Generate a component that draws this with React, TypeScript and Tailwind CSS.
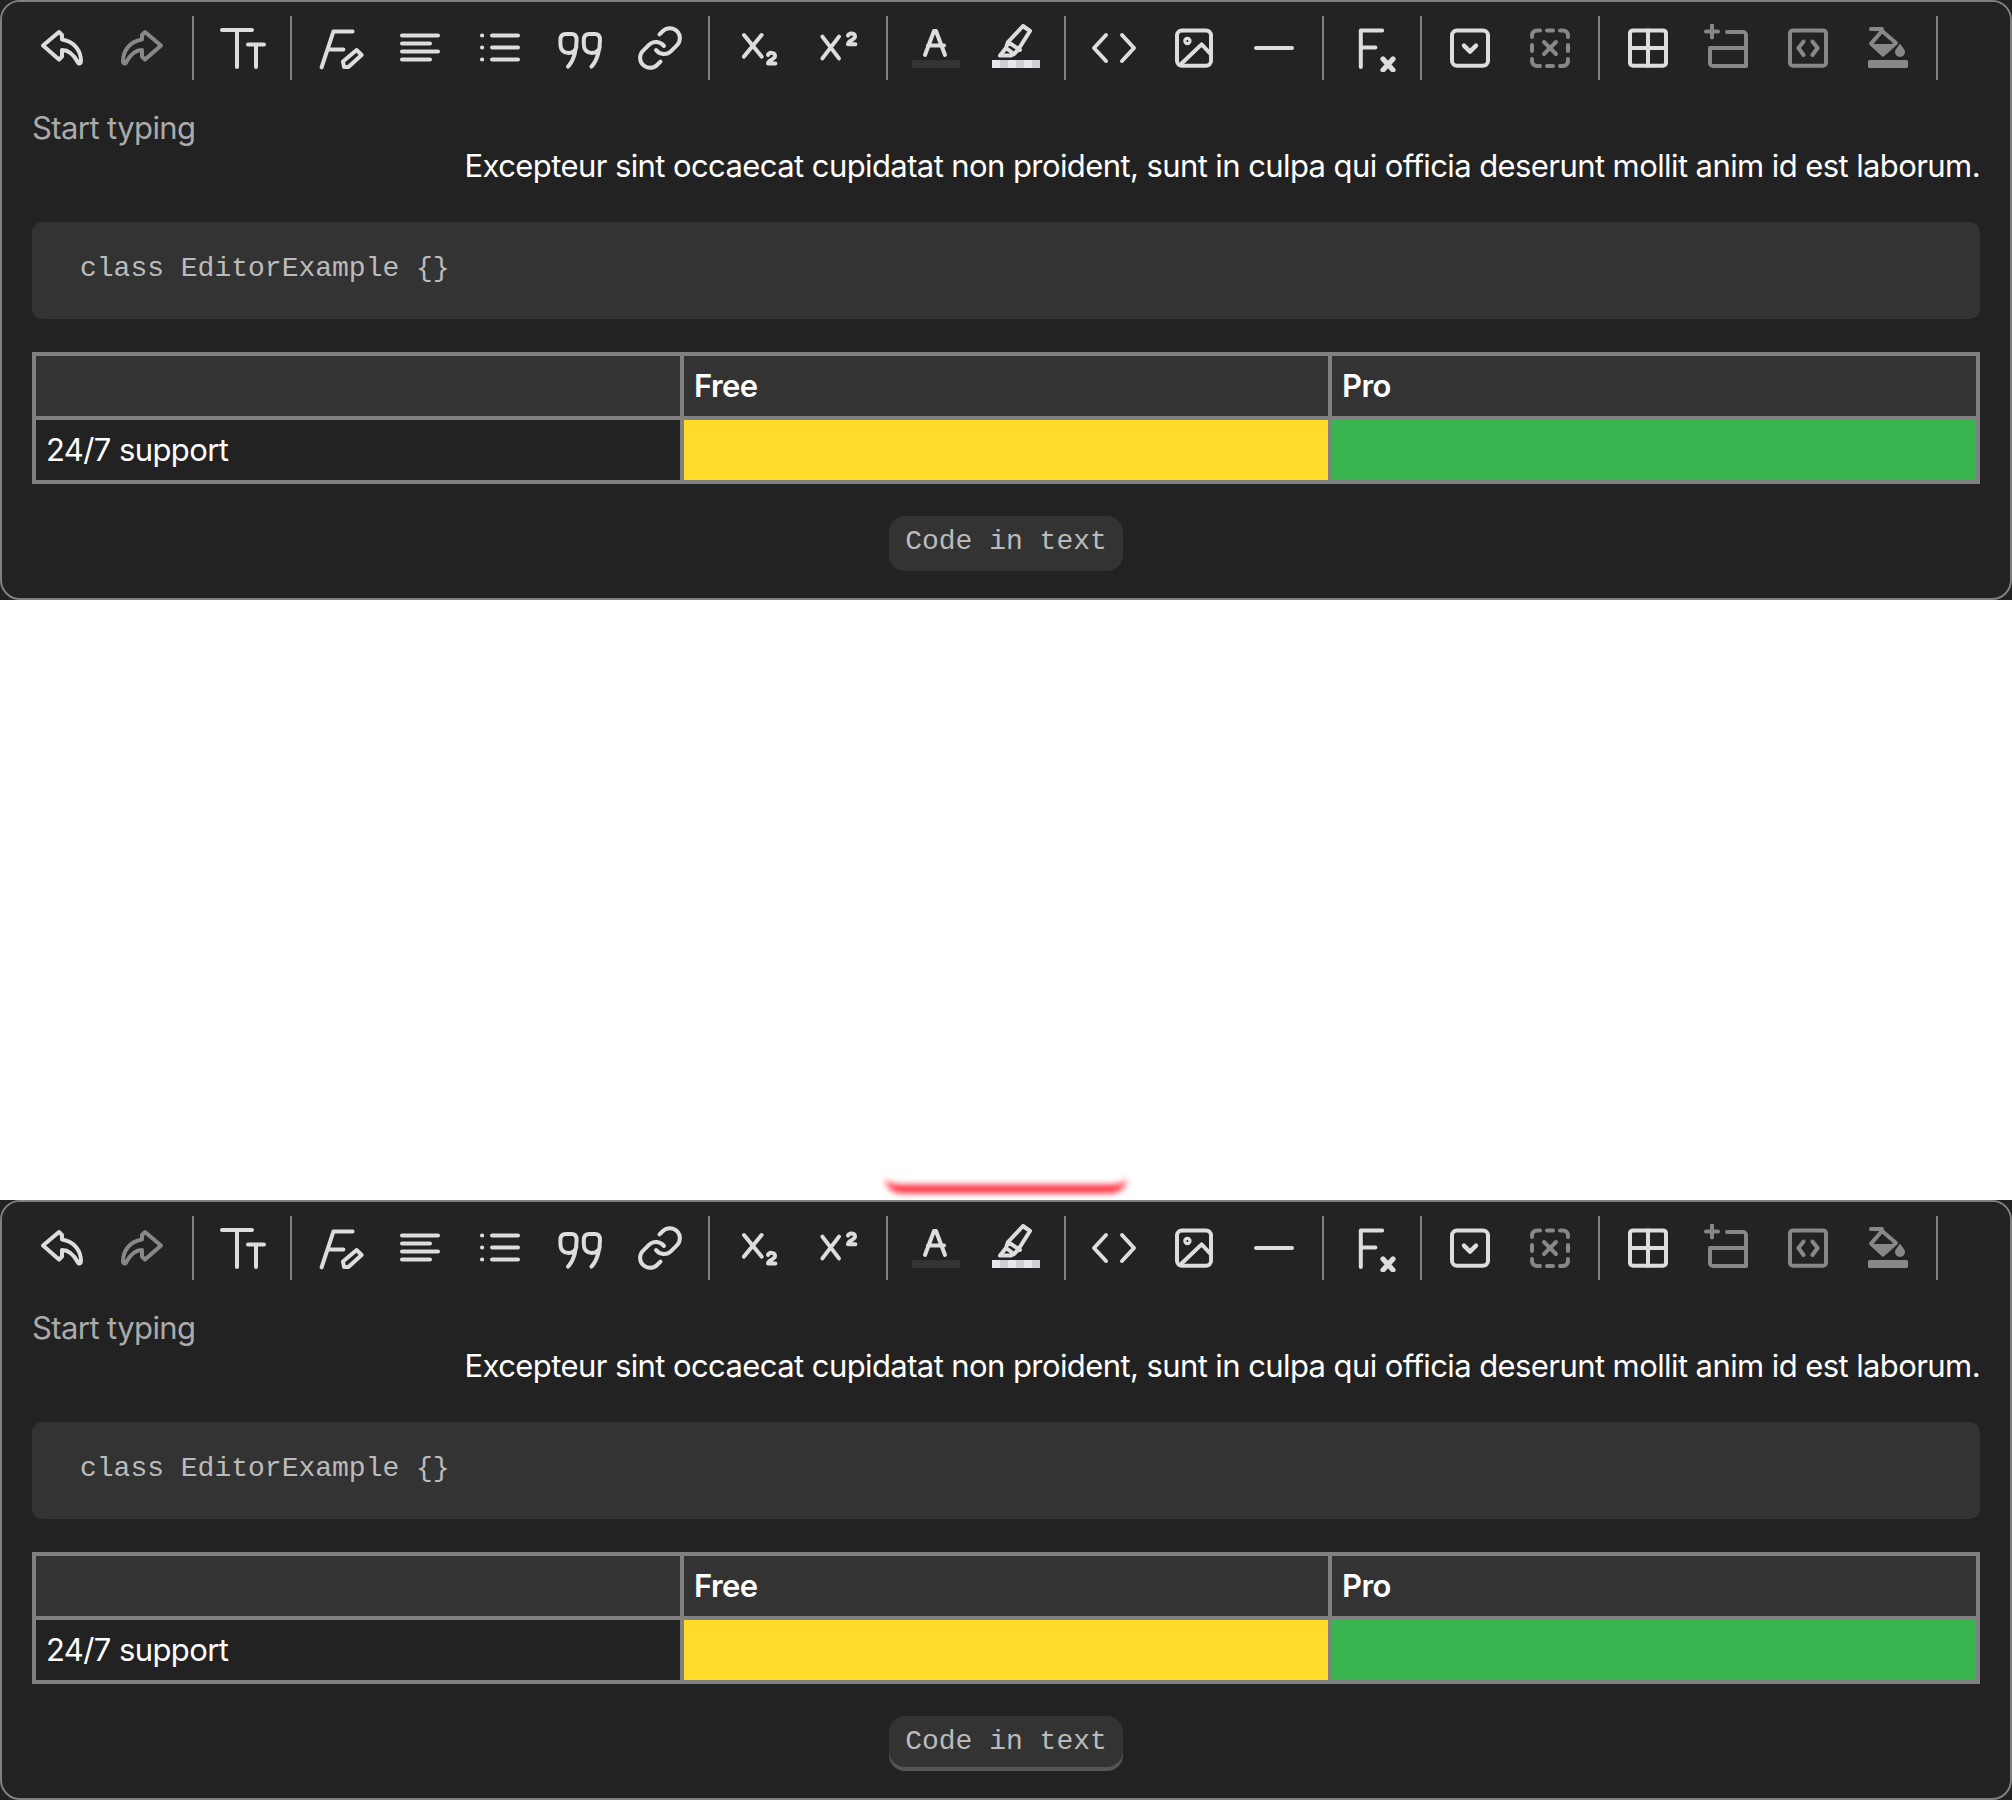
const icon = "w-12 h-12 fill-none stroke-current stroke-2 [stroke-linecap:round] [stroke-linejoin:round]";

const Undo = () => (
  <svg viewBox="0 0 24 24" className={icon}>
    <path d="M9.5 4 1.500 10.800l8 7 1.500-1.500V13c3.500 0 6 2.500 8 6.300.5.800 1.500.5 1.500-.5 0-5-3-10-9.500-11V5.500z" />
  </svg>
);

const Redo = () => (
  <svg viewBox="0 0 24 24" className={icon}>
    <path d="M12.500 4l8 6.800-8 7-1.500-1.500V13c-3.500 0-6 2.500-8 6.300-.5.800-1.500.5-1.500-.5 0-5 3-10 9.500-11V5.500z" />
  </svg>
);

const TextSize = () => (
  <svg viewBox="0 0 24 24" className={icon}>
    <path d="M2 3h15M9.500 3v18.500M15 10.200h8M19 10.200v11.300" />
  </svg>
);

const FontEdit = () => (
  <svg viewBox="0 0 24 24" className={icon}>
    <path d="M2.800 21.700 8.700 3.800h9.600M5.700 12.700h8" />
    <path d="M14 21.500l-.5-2.700 6.800-5.800 2.500 2.500-6.600 6z" />
  </svg>
);

const Align = () => (
  <svg viewBox="0 0 24 24" className={icon}>
    <path d="M3 5.800h18M3 9.800h14M3 13.800h18M3 17.800h14" />
  </svg>
);

const List = () => (
  <svg viewBox="0 0 24 24" className={icon}>
    <path d="M8 5.800h13M8 11.800h13M8 17.800h13M3 5.800h.1M3 11.800h.1M3 17.800h.1" />
  </svg>
);

const Quote = () => (
  <svg viewBox="0 0 24 24" className={icon}>
    <path d="M10.300 8c0 5-1.500 10.500-4.300 13.300M10.300 8c0-2-1-3-2.500-3H5C3 5 2.200 6 2.200 8v2c0 3 1.800 4.500 4 4.500 2 0 3.500-1 4-3" />
    <path d="M22 8c0 5-1.500 10.500-4.300 13.300M22 8c0-2-1-3-2.500-3h-2.800c-2 0-2.800 1-2.800 3v2c0 3 1.800 4.500 4 4.500 2 0 3.500-1 4-3" />
  </svg>
);

const LinkIcon = () => (
  <svg viewBox="0 0 24 24" className={icon}>
    <path d="M10 13a5 5 0 0 0 7.540.54l3-3a5 5 0 0 0-7.070-7.070l-1.720 1.710" />
    <path d="M14 11a5 5 0 0 0-7.540-.54l-3 3a5 5 0 0 0 7.070 7.070l1.710-1.710" />
  </svg>
);

const Sub = () => (
  <svg viewBox="0 0 24 24" className={icon}>
    <path d="m5 5.500 8.800 10.800M13.800 5.500 5 16.300" />
    <path d="M17 15.500c.5-1.500 3.500-1.500 3.500.5 0 1.700-3.500 2-3.500 3.800h3.700" />
  </svg>
);

const Sup = () => (
  <svg viewBox="0 0 24 24" className={icon}>
    <path d="m4.200 6.300 8.300 10.900M12.500 6.300l-8.300 10.900" />
    <path d="M17 5.800c.5-1.500 3.500-1.500 3.500.5 0 1.700-3.500 2-3.500 3.800h3.700" />
  </svg>
);

const TextColor = () => (
  <svg viewBox="0 0 24 24" className={icon}>
    <path d="M6.500 15.500 11 3.500h1l4.500 12M8 10.800h8" />
    <rect x="0" y="18" width="24" height="4" className="fill-[#333] stroke-0" />
  </svg>
);

const Marker = () => (
  <svg viewBox="0 0 24 24" className={icon}>
    <path d="M15.500 1 19 3.500l-6 9.500-2 2-4-3 1-3zM8 9l6 4M7 12l-3 3.800h5.500L11 15" />
    {[0, 8, 16].map((x) => (
      <rect key={x} x={x} y="18" width="4" height="4" className="fill-[#e5e7eb] stroke-0" />
    ))}
    {[4, 12, 20].map((x) => (
      <rect key={x} x={x} y="18" width="4" height="4" className="fill-[#ccd0d6] stroke-0" />
    ))}
  </svg>
);

const CodeIcon = () => (
  <svg viewBox="0 0 24 24" className={icon}>
    <path d="M8 5.500 2 12l6 6.500M16 5.500l6 6.500-6 6.500" />
  </svg>
);

const Picture = () => (
  <svg viewBox="0 0 24 24" className={icon}>
    <rect x="3.500" y="3.200" width="17" height="17.700" rx="2.500" />
    <circle cx="8.700" cy="8.500" r="1.300" className="stroke-[1.600]" />
    <path d="M5 20.500 15.800 10.200l4.700 5" />
  </svg>
);

const Rule = () => (
  <svg viewBox="0 0 24 24" className={icon}>
    <path d="M3 12h18" />
  </svg>
);

const Formula = () => (
  <svg viewBox="0 0 24 24" className={icon}>
    <path d="M6.400 21.500V3.200h10.700M6.400 11.800h7.300" />
    <path d="m17.500 17.500 5 5.500M22.500 17.500l-5 5.500" className="stroke-[2.600]" />
  </svg>
);

const Callout = () => (
  <svg viewBox="0 0 24 24" className={icon}>
    <rect x="3" y="3.200" width="18" height="17.700" rx="2.500" />
    <path d="m9 10.800 3 3 3-3" className="stroke-[2.200]" />
  </svg>
);

const DashedX = () => (
  <svg viewBox="0 0 24 24" className={icon}>
    <path d="M3 6.500V5.700a2.500 2.500 0 0 1 2.500-2.500H7M10.500 3.200h3M17 3.200h1.500A2.500 2.500 0 0 1 21 5.700v.8M21 10.500v3M21 17.500v1a2.500 2.500 0 0 1-2.500 2.500H17M13.500 21h-3M7 21H5.500A2.500 2.500 0 0 1 3 18.500v-1M3 13.500v-3" />
    <path d="m9 9 6 6M15 9l-6 6" />
  </svg>
);

const TableIcon = () => (
  <svg viewBox="0 0 24 24" className={icon}>
    <rect x="3" y="3.200" width="18" height="17.700" rx="1.500" />
    <path d="M12 3.200v17.700M3 12h18" />
  </svg>
);

const AddRow = () => (
  <svg viewBox="0 0 24 24" className={icon}>
    <path d="M11.500 4H19.500A1.500 1.500 0 0 1 21 5.500v15.500H4.500A1.500 1.500 0 0 1 3 19.500v-7.500h18M1 3.700h6M4 .7v6" />
  </svg>
);

const CodeFrame = () => (
  <svg viewBox="0 0 24 24" className={icon}>
    <rect x="3" y="3.200" width="18" height="17.700" rx="1.500" />
    <path d="M9.800 8.800 7.200 12l2.600 3.500M14.200 8.800l2.600 3.200-2.600 3.500" />
  </svg>
);

const Fill = () => (
  <svg viewBox="0 0 24 24" className={icon}>
    <path d="M3.500 2.500H9M9 3.500 3.500 9.800l6 5.500 6.500-5.800z" />
    <path d="M4.500 10.500H15L9.500 15z" className="fill-current stroke-1" />
    <path d="M18 9.800c1 1.800 2.500 2.900 2.500 4.200a2.500 2.500 0 0 1-5 0c0-1.300 1.500-2.400 2.500-4.200z" className="fill-current stroke-0" />
    <rect x="2" y="18" width="20" height="4" rx=".8" className="fill-current stroke-0" />
  </svg>
);

const groups = [
  [{ I: Undo }, { I: Redo, off: true }],
  [{ I: TextSize }],
  [{ I: FontEdit }, { I: Align }, { I: List }, { I: Quote }, { I: LinkIcon }],
  [{ I: Sub }, { I: Sup }],
  [{ I: TextColor }, { I: Marker }],
  [{ I: CodeIcon }, { I: Picture }, { I: Rule }],
  [{ I: Formula }],
  [{ I: Callout }, { I: DashedX, off: true }],
  [{ I: TableIcon }, { I: AddRow, off: true }, { I: CodeFrame, off: true }, { I: Fill, off: true }],
];

function Toolbar() {
  return (
    <div className="flex h-[94px] items-start rounded-t-[18px] bg-[#232323] px-[22px] pt-[14px]">
      {groups.map((group, i) => (
        <div key={i} className="flex items-center">
          {group.map(({ I, off }: any, j) => (
            <div key={j} className={`flex h-16 w-20 items-center justify-center ${off ? "text-[#888]" : "text-[#ddd]"}`}>
              <I />
            </div>
          ))}
          <div className="mx-2 h-16 w-[2px] bg-[#808080]" />
        </div>
      ))}
    </div>
  );
}

function Editor({ pillShadow }: { pillShadow?: boolean }) {
  return (
    <div className="h-[600px] bg-[#222]">
      <div className="h-full rounded-[20px] border-2 border-[#808080] font-['Inter',sans-serif] text-[31px] tracking-[-0.019em] text-white">
        <Toolbar />
        <div className="px-[30px]">
          <p className="h-[44px] pt-[14px] leading-[36px] text-[#aaa]">Start typing</p>
          <p className="mt-[4px] text-right leading-[44px]">
            Excepteur sint occaecat cupidatat non proident, sunt in culpa qui officia deserunt mollit anim id est laborum.
          </p>
          <pre className="mt-[34px] h-[97px] rounded-[10px] bg-[#333] px-12 pt-[29px] font-['Liberation_Mono',monospace] text-[28px] leading-[36px] tracking-normal text-[#bbb]">
            class EditorExample {"{}"}
          </pre>
          <table className="mt-[33px] w-full table-fixed border-collapse">
            <tbody>
              <tr className="h-[64px] bg-[#333]">
                <th className="border-4 border-[#808080] px-[10px]" />
                <th className="border-4 border-[#808080] px-[10px] text-left font-semibold">Free</th>
                <th className="border-4 border-[#808080] px-[10px] text-left font-semibold">Pro</th>
              </tr>
              <tr className="h-[64px]">
                <td className="border-4 border-[#808080] px-[10px]">24/7 support</td>
                <td className="border-4 border-[#808080] bg-[#ffdc29]" />
                <td className="border-4 border-[#808080] bg-[#38b54f]" />
              </tr>
            </tbody>
          </table>
          <p className="mt-[31px] text-center">
            <code
              className={`inline-block h-[55px] rounded-[16px] bg-[#333] px-4 font-['Liberation_Mono',monospace] text-[28px] leading-[52px] tracking-normal text-[#bbb] ${pillShadow ? "shadow-[inset_0_-4px_0_#555]" : ""}`}
            >
              Code in text
            </code>
          </p>
        </div>
      </div>
    </div>
  );
}

export default function App() {
  return (
    <div className="w-[2012px]">
      <Editor />
      <div className="flex h-[600px] items-end justify-center bg-white pb-[7px]">
        <div className="h-[22px] w-[242px] rounded-b-[16px] border-b-[8px] border-[#ff2030] blur-[3px]" />
      </div>
      <Editor pillShadow />
    </div>
  );
}
